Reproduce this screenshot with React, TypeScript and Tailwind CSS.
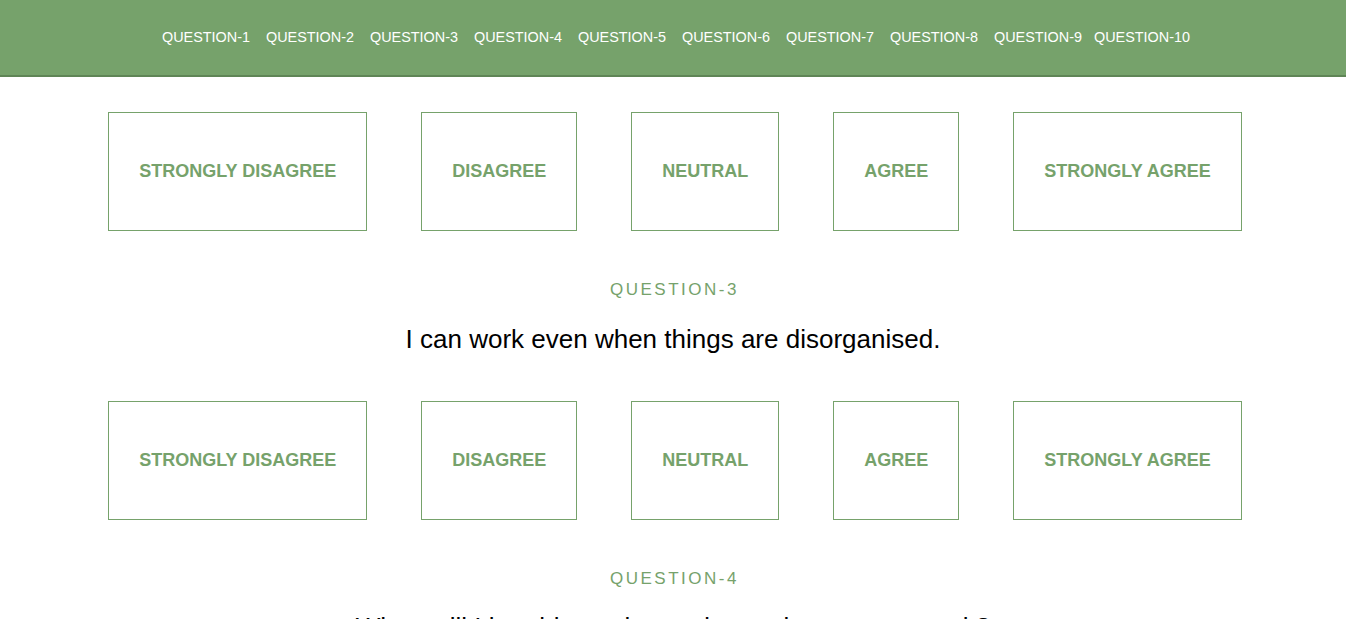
const NAV = [
  { label: "QUESTION-1", w: "w-[104px]" },
  { label: "QUESTION-2", w: "w-[104px]" },
  { label: "QUESTION-3", w: "w-[104px]" },
  { label: "QUESTION-4", w: "w-[104px]" },
  { label: "QUESTION-5", w: "w-[104px]" },
  { label: "QUESTION-6", w: "w-[104px]" },
  { label: "QUESTION-7", w: "w-[104px]" },
  { label: "QUESTION-8", w: "w-[104px]" },
  { label: "QUESTION-9", w: "w-[100px]" },
  { label: "QUESTION-10", w: "w-auto" },
];

const CHOICES = ["STRONGLY DISAGREE", "DISAGREE", "NEUTRAL", "AGREE", "STRONGLY AGREE"];

function Choices() {
  return (
    <div className="flex justify-center gap-[54px] pl-[4px]">
      {CHOICES.map((c) => (
        <button
          key={c}
          className="h-[119px] border border-[#76a26b] bg-white px-[30px] text-[18px] font-bold text-[#76a26b]"
        >
          {c}
        </button>
      ))}
    </div>
  );
}

function Question({ n, text, last = false }: { n: number; text: string; last?: boolean }) {
  return (
    <div className="flex flex-col items-center">
      <p className="mt-[49px] pl-[3px] text-[17px] leading-[20px] tracking-[2.5px] text-[#76a26b]">
        QUESTION-{n}
      </p>
      <p className={`${last ? "mt-[23px]" : "mt-[24px]"} text-[26px] leading-[30px] text-black`}>
        {text}
      </p>
    </div>
  );
}

export default function App() {
  return (
    <div className="h-screen overflow-hidden bg-white font-['Liberation_Sans',Arial,sans-serif]">
      <header className="h-[77px] border-b-2 border-[#5f8556] bg-[#76a26b]">
        <nav className="flex h-full items-center pl-[162px]">
          {NAV.map((item) => (
            <a key={item.label} href="#" className={`${item.w} shrink-0 text-[14.4px] text-white`}>
              {item.label}
            </a>
          ))}
        </nav>
      </header>

      <main className="pt-[35px]">
        <Choices />
        <Question n={3} text="I can work even when things are disorganised." />
        <div className="mt-[47px]">
          <Choices />
        </div>
        <Question n={4} text="When will I be able to plan and organise my own work?" last />
      </main>
    </div>
  );
}
